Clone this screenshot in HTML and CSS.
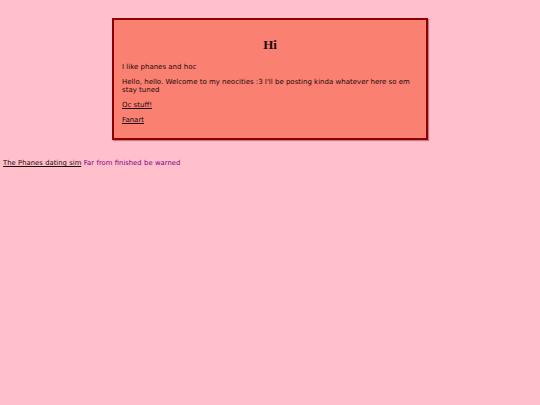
FILE: index.html
```html
<!DOCTYPE html>
<html>
<head>
<meta charset="utf-8">
<link rel="stylesheet" href="styles.css">
</head>
<body>
<div class="box">
  <h1 class="title">Hi</h1>
  <p class="text">I like phanes and hoc</p>
  <p class="text">Hello, hello. Welcome to my neocities :3 I'll be posting kinda whatever here so em stay tuned</p>
  <p class="text"><a class="link" href="#">Oc stuff!</a></p>
  <p class="text"><a class="link" href="#">Fanart</a></p>
</div>
<p class="footer"><a class="link" href="#">The Phanes dating sim</a> <span class="note">Far from finished be warned</span></p>
</body>
</html>
```
FILE: styles.css
```css
html, body {
  margin: 0;
  background: #ffc0cb;
}
body {
  padding: 18px 3px 0;
  font-family: "DejaVu Sans", Verdana, sans-serif;
  font-size: 7px;
  line-height: 8px;
  color: #1a0a0a;
}
.box {
  width: 296px;
  margin: 0 auto;
  padding: 8px 8px 7px;
  background: #fa8072;
  border: 2px solid #8b0000;
  box-shadow: 1px 1px 1px rgba(80, 0, 0, 0.35);
}
.title {
  margin: 9px 0 11px;
  font-family: "Liberation Serif", "Times New Roman", serif;
  font-size: 13px;
  line-height: 15px;
  font-weight: bold;
  text-align: center;
  color: #1a0a0a;
}
.text {
  margin: 7px 0;
}
.link {
  color: #1a0a0a;
  text-decoration: underline;
}
.footer {
  margin: 19px 0 0;
  font-size: 6.8px;
  word-spacing: 0.3px;
}
.note {
  color: #800080;
}
```
